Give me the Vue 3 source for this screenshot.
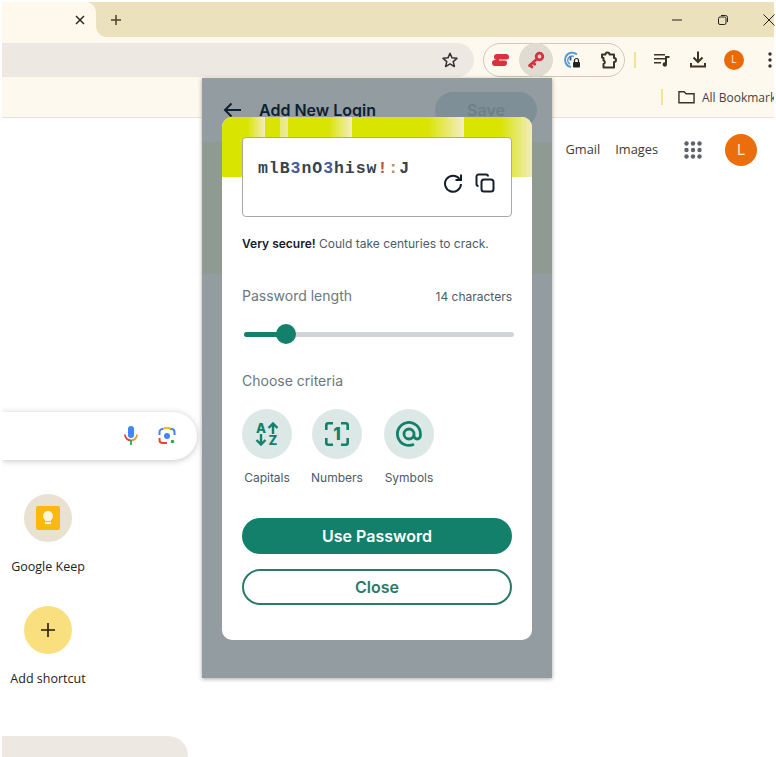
<script setup>
const stripes = 'linear-gradient(90deg,#d9e400 0,#d9e400 25px,#f3edbd 43px,#d9e400 43px,#d9e400 58px,#e6e87a 58px,#edeaa0 66px,#d9e400 66px,#d9e400 106px,#f3edbd 130px,#d9e400 130px,#d9e400 205px,#f5eec6 242px,#d9e400 242px,#d9e400 278px,#f1ecc0 310px)'
const criteria = [
  { label: 'Capitals', kind: 'caps' },
  { label: 'Numbers', kind: 'num' },
  { label: 'Symbols', kind: 'sym' }
]
const pw = [
  ['mlB', '#36444f'], ['3', '#4a5aa0'], ['nO', '#36444f'], ['3', '#4a5aa0'],
  ['hisw', '#36444f'], ['!', '#b5573a'], [':', '#b58d68'], ['J', '#36444f']
]
</script>

<template>
  <div class="screen">
    <div class="tabbar">
      <div class="tab">
        <svg class="ic-x" width="10" height="10" viewBox="0 0 10 10"><path d="M1 1l8 8M9 1l-8 8" stroke="#2b2a22" stroke-width="1.500"/></svg>
      </div>
      <svg class="ic-plus" width="12" height="12" viewBox="0 0 12 12"><path d="M6 1v10M1 6h10" stroke="#4a4328" stroke-width="1.500"/></svg>
      <div class="winbtns">
        <svg width="12" height="12" viewBox="0 0 12 12"><path d="M1 6h10" stroke="#222" stroke-width="1"/></svg>
        <svg width="12" height="12" viewBox="0 0 12 12" fill="none" stroke="#222"><rect x="1.500" y="3" width="7.500" height="7.500" rx="1.500"/><path d="M4 1.500h4.500a2 2 0 0 1 2 2V8"/></svg>
        <svg class="win-close" width="12" height="12" viewBox="0 0 12 12"><path d="M.5.5l11 11M11.500.5l-11 11" stroke="#222" stroke-width="1"/></svg>
      </div>
    </div>

    <div class="toolbar">
      <div class="omnibox">
        <svg width="18" height="18" viewBox="0 0 24 24" fill="none" stroke="#333" stroke-width="2" stroke-linejoin="round"><path d="M12 3l2.700 6.100 6.600.7-5 4.400 1.500 6.500L12 17.300l-5.800 3.400 1.500-6.500-5-4.400 6.600-.7z"/></svg>
      </div>
      <div class="extpill">
        <span class="ext">
          <svg width="18" height="14" viewBox="0 0 18 14" fill="none"><path d="M6 4h9M4 10h9" stroke="#d8323f" stroke-width="6" stroke-linecap="round"/><path d="M8 7h10" stroke="#fef9ee" stroke-width="1"/></svg>
        </span>
        <span class="ext ext-on">
          <svg width="20" height="20" viewBox="0 0 20 20" fill="none" stroke="#d3323f"><circle cx="13.500" cy="6.500" r="3.300" stroke-width="2.800"/><path d="M11 9L3.500 15.500M4 15l2 2M7 12.500l1.800 1.800" stroke-width="2.800" stroke-linecap="round"/></svg>
        </span>
        <span class="ext">
          <svg width="20" height="20" viewBox="0 0 20 20" fill="none"><path d="M15 4.500A7.200 7.200 0 1 0 9 17" stroke="#5b9bd5" stroke-width="2"/><path d="M12 6.500A4.200 4.200 0 1 0 8 14" stroke="#5b9bd5" stroke-width="1.500"/><path d="M8.500 6.500v4" stroke="#2c5e9e" stroke-width="1.800"/><rect x="11" y="12" width="7" height="5.500" rx="1" fill="#222"/><path d="M12.500 12v-1.500a2 2 0 0 1 4 0V12" stroke="#222" stroke-width="1.200"/></svg>
        </span>
        <span class="ext">
          <svg width="19" height="19" viewBox="0 0 19 19" fill="none" stroke="#3a3424" stroke-width="2" stroke-linejoin="round"><path d="M3 3.500h3.500a2 2 0 1 1 4 0H15V7a2 2 0 1 1 0 4v5.500H4.500V13a1.800 1.800 0 0 0 0-3.500V7L3 6.500z"/></svg>
        </span>
      </div>
      <span class="sep"></span>
      <svg class="t-queue" width="16" height="14" viewBox="0 0 16 14" fill="#3a3424"><path d="M0 1h11v1.500H0zM0 5h11v1.500H0zM0 9h7v1.500H0z"/><path d="M11 3h4.500v2H13v6.500a2.200 2.200 0 1 1-2-2.200z"/></svg>
      <svg class="t-down" width="18" height="18" viewBox="0 0 18 18" fill="none" stroke="#3a3424" stroke-width="2"><path d="M9 1.500v10M4.500 7.500L9 12l4.500-4.500M2 13v3.500h14V13"/></svg>
      <span class="t-avatar">L</span>
      <svg class="t-dots" width="4" height="16" viewBox="0 0 4 16" fill="#333"><circle cx="2" cy="2" r="1.700"/><circle cx="2" cy="8" r="1.700"/><circle cx="2" cy="14" r="1.700"/></svg>
    </div>

    <div class="bookmarks">
      <span class="bm-sep"></span>
      <svg class="bm-folder" width="17" height="14" viewBox="0 0 18 14" fill="none" stroke="#3a3424" stroke-width="1.500"><path d="M1 1.500h5.500l2 2H17v9.500H1z"/></svg>
      <span class="bm-text">All Bookmarks</span>
    </div>

    <div class="page">
      <header class="page-head">
        <a>Gmail</a>
        <a>Images</a>
        <svg class="apps" width="18" height="18" viewBox="0 0 18 18" fill="#5f6368">
          <template v-for="y in [2.500,9,15.500]" :key="y">
            <circle v-for="x in [2.500,9,15.500]" :key="x" :cx="x" :cy="y" r="2.200"/>
          </template>
        </svg>
        <span class="avatar">L</span>
      </header>

      <div class="search">
        <svg width="14" height="20" viewBox="0 0 14 20" fill="none"><rect x="4" y="0" width="6" height="12" rx="3" fill="#4285f4"/><path d="M1 8.500a6 6 0 0 0 6 6" stroke="#ea4335" stroke-width="1.800"/><path d="M13 8.500a6 6 0 0 1-6 6" stroke="#d8a13b" stroke-width="1.800"/><path d="M7 14v5" stroke="#34a853" stroke-width="1.800"/></svg>
        <svg width="18" height="18" viewBox="0 0 18 18" fill="none" stroke-width="2"><path d="M1.500 8V5a3 3 0 0 1 3-3h1" stroke="#4285f4"/><path d="M12 2h1.500a3 3 0 0 1 3 3v3" stroke="#4285f4"/><path d="M1.500 11v2a3 3 0 0 0 3 3H9" stroke="#ea4335"/><path d="M5.500 2l1-1h5l1 1" stroke="#fbbc05"/><circle cx="9" cy="9" r="3" fill="#4285f4" stroke="none"/><circle cx="14.500" cy="14.500" r="1.800" fill="#34a853" stroke="none"/></svg>
      </div>

      <div class="shortcut keep">
        <span class="sc-circle sc-keep">
          <svg width="24" height="24" viewBox="0 0 24 24"><rect width="24" height="24" rx="2" fill="#fbb80f"/><circle cx="12" cy="10" r="5" fill="#fff6da"/><rect x="9" y="11" width="6" height="4" fill="#fff6da"/><rect x="9" y="16" width="6" height="2.200" fill="#fff6da"/></svg>
        </span>
        <span class="sc-label">Google Keep</span>
      </div>
      <div class="shortcut add">
        <span class="sc-circle sc-add">
          <svg width="14" height="14" viewBox="0 0 14 14"><path d="M7 0v14M0 7h14" stroke="#241c0a" stroke-width="1.600"/></svg>
        </span>
        <span class="sc-label">Add shortcut</span>
      </div>
      <div class="bottom-card"></div>
    </div>

    <div class="popup">
      <div class="popup-head">
        <svg width="20" height="16" viewBox="0 0 20 16" fill="none" stroke="#10202e" stroke-width="2"><path d="M18 8H2M8.500 1.500L2 8l6.500 6.500"/></svg>
        <span class="popup-title">Add New Login</span>
        <span class="popup-save">Save</span>
      </div>
      <div class="popup-band"></div>

      <div class="card">
        <div class="card-top" :style="{ background: stripes }"></div>
        <div class="pw-box">
          <div class="pw"><span v-for="(p, i) in pw" :key="i" :style="{ color: p[1] }">{{ p[0] }}</span></div>
          <div class="pw-actions">
            <svg width="20" height="20" viewBox="0 0 20 20" fill="none" stroke="#15202b" stroke-width="2"><path d="M16.500 6A8 8 0 1 0 18 11"/><path d="M18 1.500V7h-5.500" stroke-linejoin="miter"/></svg>
            <svg width="20" height="20" viewBox="0 0 20 20" fill="none" stroke="#15202b" stroke-width="2"><rect x="6.500" y="6.500" width="12" height="12" rx="2.500"/><path d="M3.500 13A2 2 0 0 1 1.500 11V3.500a2 2 0 0 1 2-2H11a2 2 0 0 1 2 2"/></svg>
          </div>
        </div>
        <p class="secure"><b>Very secure!</b> Could take centuries to crack.</p>
        <div class="len-row">
          <span class="field-label">Password length</span>
          <span class="chars">14 characters</span>
        </div>
        <div class="slider"><span class="slider-fill"></span><span class="slider-thumb"></span></div>
        <div class="field-label crit-label">Choose criteria</div>
        <div class="crit">
          <div v-for="c in criteria" :key="c.label" class="crit-item">
            <span class="crit-circle">
              <span v-if="c.kind === 'caps'" class="caps-grid">
                <span class="caps-l">A</span>
                <svg width="12" height="12" viewBox="0 0 12 12" fill="none" stroke="#12806a" stroke-width="2.400"><path d="M6 12V2M1.500 6L6 1.500 10.500 6"/></svg>
                <svg width="12" height="12" viewBox="0 0 12 12" fill="none" stroke="#12806a" stroke-width="2.400"><path d="M6 0v10M1.500 6L6 10.500 10.500 6"/></svg>
                <span class="caps-l">Z</span>
              </span>
              <span v-else-if="c.kind === 'num'" class="num-box">
                <svg width="26" height="26" viewBox="0 0 26 26" fill="none" stroke="#12806a" stroke-width="2.600">
                  <path d="M9 2.300H4.300a2 2 0 0 0-2 2V9M17 2.300h4.700a2 2 0 0 1 2 2V9M9 23.700H4.300a2 2 0 0 1-2-2V17M17 23.700h4.700a2 2 0 0 0 2-2V17"/>
                </svg>
                <span class="num-l">1</span>
              </span>
              <svg v-else width="26" height="26" viewBox="0 0 26 26" fill="none" stroke="#12806a" stroke-width="2.800">
                <path d="M18 13a5 5 0 1 1-5-5 5 5 0 0 1 5 5v1.800a3.200 3.200 0 0 0 6.400 0V13A11.500 11.500 0 1 0 18 23.200"/>
              </svg>
            </span>
            <span class="crit-label-text">{{ c.label }}</span>
          </div>
        </div>
        <button class="btn btn-use">Use Password</button>
        <button class="btn btn-close">Close</button>
      </div>
    </div>
  </div>
</template>

<style>
html, body { margin: 0; background: #fff; }
</style>

<style scoped>
.screen {
  position: relative;
  width: 776px;
  height: 757px;
  overflow: hidden;
  background: #fff;
  box-sizing: border-box;
  padding: 2px 2px 0 2px;
  font-family: "Inter", sans-serif;
}
.tabbar {
  height: 35px;
  background: #ebe1bd;
  display: flex;
  align-items: center;
}
.tab {
  position: relative;
  width: 94px;
  height: 35px;
  background: #fff9ed;
  border-radius: 0 10px 0 0;
  display: flex;
  align-items: center;
  justify-content: flex-end;
  padding-right: 11px;
  box-sizing: border-box;
}
.tab::after {
  content: "";
  position: absolute;
  left: 100%;
  bottom: 0;
  width: 10px;
  height: 10px;
  background: radial-gradient(circle at 100% 0, transparent 9.500px, #fff9ed 10px);
}
.ic-plus { margin-left: 14px; }
.winbtns {
  margin-left: auto;
  display: flex;
  align-items: center;
  gap: 34px;
  margin-right: -1px;
}
.toolbar {
  height: 40px;
  background: #fef9ee;
  display: flex;
  align-items: flex-start;
  padding-top: 6px;
  box-sizing: border-box;
}
.omnibox {
  width: 472px;
  height: 34px;
  background: #eee8e2;
  border-radius: 0 17px 17px 0;
  display: flex;
  align-items: center;
  justify-content: flex-end;
  padding-right: 15px;
  box-sizing: border-box;
}
.extpill {
  width: 142px;
  height: 34px;
  margin-left: 9px;
  border: 1px solid #cfc9b8;
  border-radius: 17px;
  box-sizing: border-box;
  display: flex;
  align-items: center;
  gap: 2px;
}
.ext {
  width: 34px;
  height: 34px;
  flex: none;
  display: flex;
  align-items: center;
  justify-content: center;
}
.ext:first-child { margin-left: -1px; }
.ext-on { background: #e1dcd2; border-radius: 50%; }
.sep {
  width: 2px;
  height: 16px;
  background: #f3e29a;
  margin: 9px 0 0 9px;
}
.t-queue { margin: 10px 0 0 18px; }
.t-down { margin: 7px 0 0 19px; }
.t-avatar {
  width: 20px;
  height: 20px;
  border-radius: 50%;
  background: #ea6a0a;
  color: #fde7d0;
  font: 10px/20px "Roboto", sans-serif;
  text-align: center;
  margin: 7px 0 0 17px;
}
.t-dots { margin: 9px 0 0 24px; }
.bookmarks {
  height: 41px;
  box-sizing: border-box;
  background: #fef9ee;
  border-bottom: 1px solid #e7e3d9;
  display: flex;
  align-items: center;
  padding-left: 659px;
  white-space: nowrap;
  overflow: hidden;
}
.bm-sep { width: 2px; height: 16px; background: #f3e29a; margin-right: 15px; flex: none; }
.bm-folder { flex: none; }
.bm-text {
  margin-left: 7px;
  font: 12px "Open Sans", sans-serif;
  color: #444;
}
.page { position: relative; height: 640px; background: #fff; }
.page-head {
  display: flex;
  align-items: center;
  justify-content: flex-end;
  padding: 16px 17px 0 0;
  height: 32px;
  font: 12.800px "Open Sans", sans-serif;
  color: #3c3c3c;
}
.page-head a { margin-top: -2px; }
.page-head a + a { margin-left: 15px; }
.apps { margin-left: 26px; }
.avatar {
  width: 32px;
  height: 32px;
  border-radius: 50%;
  background: #ec6d0c;
  color: #fde7d0;
  margin-left: 23px;
  font: 15px/32px "Roboto", sans-serif;
  text-align: center;
}
.search {
  margin-top: 246px;
  width: 195px;
  height: 48px;
  border-radius: 0 24px 24px 0;
  box-shadow: 0 1px 6px rgba(32, 33, 36, .26);
  display: flex;
  align-items: center;
  justify-content: flex-end;
  gap: 20px;
  padding-right: 21px;
  box-sizing: border-box;
  clip-path: inset(-10px -10px -10px 0);
}
.shortcut {
  width: 92px;
  display: flex;
  flex-direction: column;
  align-items: center;
  gap: 17px;
}
.keep { margin-top: 34px; }
.add { margin-top: 31px; }
.sc-circle {
  width: 48px;
  height: 48px;
  border-radius: 50%;
  display: flex;
  align-items: center;
  justify-content: center;
}
.sc-keep { background: #e9e2d3; }
.sc-add { background: #fadf7f; }
.sc-label {
  font: 12.500px/16px "Open Sans", sans-serif;
  color: #222;
  white-space: nowrap;
}
.bottom-card {
  margin-top: 49px;
  width: 186px;
  height: 40px;
  background: #eee8e2;
  border-radius: 0 20px 0 0;
}
.popup {
  position: absolute;
  left: 202px;
  top: 78px;
  width: 350px;
  height: 600px;
  background: #939da1;
  box-shadow: 0 1px 4px rgba(60, 60, 50, .45);
}
.popup-head {
  height: 64px;
  display: flex;
  align-items: center;
  padding: 0 15px 0 21px;
  box-sizing: border-box;
}
.popup-title {
  margin-left: 16px;
  font-weight: 600;
  font-size: 16px;
  color: #0f2030;
}
.popup-save {
  margin-left: auto;
  width: 102px;
  height: 36px;
  border-radius: 18px;
  background: #7e8f97;
  color: #6f7f88;
  font-weight: 600;
  font-size: 16px;
  line-height: 36px;
  text-align: center;
}
.popup-band { height: 132px; background: #8f9a93; }
.card {
  position: absolute;
  left: 20px;
  top: 39px;
  width: 310px;
  height: 523px;
  background: #fff;
  border-radius: 10px;
  overflow: hidden;
  padding: 20px 20px 0;
  box-sizing: border-box;
}
.card-top {
  position: absolute;
  left: 0;
  top: 0;
  width: 100%;
  height: 60px;
}
.pw-box {
  position: relative;
  height: 80px;
  background: #fff;
  border: 1px solid #a9a9a9;
  border-radius: 4px;
  box-sizing: border-box;
  padding: 21px 15px 0;
}
.pw {
  font: 700 16.500px/20px "Liberation Mono", monospace;
  letter-spacing: .95px;
  white-space: nowrap;
}
.pw-actions {
  position: absolute;
  right: 16px;
  top: 35px;
  display: flex;
  gap: 12px;
}
.secure {
  margin: 19px 0 0;
  font-size: 12px;
  line-height: 16px;
  color: #4d5b66;
}
.secure b { font-weight: 600; color: #15202b; }
.len-row {
  margin-top: 35px;
  display: flex;
  justify-content: space-between;
  align-items: center;
}
.field-label { font-size: 14px; line-height: 18px; color: #6c7780; }
.chars { font-size: 12px; color: #4d5b66; }
.slider {
  position: relative;
  margin: 27px 0 0 2px;
  width: 270px;
  height: 5px;
  border-radius: 3px;
  background: #d0d3d8;
}
.slider-fill { position: absolute; left: 0; top: 0; height: 5px; width: 42px; border-radius: 3px; background: #12806a; }
.slider-thumb { position: absolute; left: 32px; top: -8px; width: 20px; height: 20px; border-radius: 50%; background: #12806a; }
.crit-label { margin-top: 35px; }
.crit { display: flex; margin-top: 19px; gap: 20px; }
.crit-item { width: 50px; display: flex; flex-direction: column; align-items: center; gap: 11px; }
.crit-item:last-child { margin-left: 2px; }
.crit-circle {
  width: 50px;
  height: 50px;
  border-radius: 50%;
  background: #dce8e6;
  display: flex;
  align-items: center;
  justify-content: center;
}
.crit-label-text { font-size: 12px; line-height: 16px; color: #4d5b66; white-space: nowrap; }
.caps-grid {
  display: grid;
  grid-template-columns: 12px 12px;
  grid-auto-rows: 12px;
  place-items: center;
}
.caps-l { font-weight: 800; font-size: 13px; line-height: 12px; color: #12806a; }
.num-box {
  position: relative;
  width: 26px;
  height: 26px;
  display: flex;
  align-items: center;
  justify-content: center;
}
.num-box svg { position: absolute; left: 0; top: 0; }
.num-l { font-weight: 800; font-size: 17px; line-height: 26px; color: #12806a; }
.btn {
  display: block;
  width: 270px;
  height: 36px;
  border-radius: 18px;
  font-family: "Inter", sans-serif;
  font-weight: 600;
  font-size: 16px;
  padding: 0;
  box-sizing: border-box;
}
.btn-use { margin-top: 32px; background: #12806a; border: 0; color: #fff; }
.btn-close { margin-top: 15px; background: #fff; border: 2px solid #2b7a69; color: #2b7a69; }
</style>
